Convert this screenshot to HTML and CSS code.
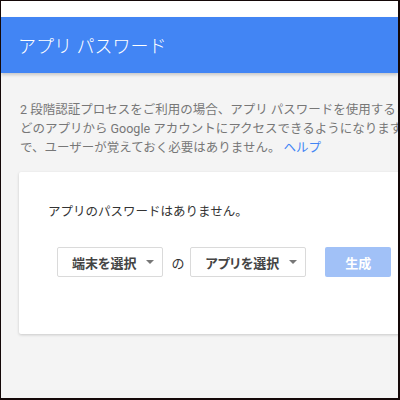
FILE: index.html
```html
<!DOCTYPE html>
<html lang="ja">
<head>
<meta charset="utf-8">
<link rel="stylesheet" href="styles.css">
</head>
<body>
<div class="frame">
  <div class="topgap"></div>
  <header class="appbar"><h1 class="title">アプリ パスワード</h1></header>
  <main class="content">
    <p class="intro">2 段階認証プロセスをご利用の場合、アプリ パスワードを使用すると<br>どのアプリから Google アカウントにアクセスできるようになります<br>で、ユーザーが覚えておく必要はありません。 <a class="link" href="#">ヘルプ</a></p>
    <section class="card">
      <p class="empty">アプリのパスワードはありません。</p>
      <div class="form-row">
        <button class="select">端末を選択<span class="caret"></span></button>
        <span class="of">の</span>
        <button class="select">アプリを選択<span class="caret"></span></button>
        <button class="generate">生成</button>
      </div>
    </section>
  </main>
</div>
</body>
</html>
```
FILE: styles.css
```css
html, body {
  margin: 0;
  padding: 0;
}
body {
  font-family: Roboto, "Noto Sans CJK JP", sans-serif;
}
.frame {
  width: 400px;
  height: 400px;
  box-sizing: border-box;
  border-style: solid;
  border-color: #140808;
  border-width: 1px 2px 2px 1px;
  background: #f4f4f4;
  overflow: hidden;
  display: flex;
  flex-direction: column;
}
.topgap {
  height: 16px;
  background: #ffffff;
  flex: none;
}
.appbar {
  height: 56px;
  flex: none;
  background: #4285f4;
  display: flex;
  align-items: center;
  padding-left: 17px;
  box-shadow: 0 2px 3px rgba(0, 0, 0, 0.18);
  position: relative;
  z-index: 1;
}
.title {
  margin: 0;
  font-size: 18px;
  font-weight: 300;
  color: #ffffff;
}
.content {
  padding: 27px 0 0 19px;
}
.intro {
  margin: 0;
  font-size: 12.5px;
  line-height: 19px;
  color: #777777;
  white-space: nowrap;
}
.link {
  color: #4285f4;
  text-decoration: none;
}
.card {
  margin-top: 15px;
  margin-left: -1px;
  width: 420px;
  background: #ffffff;
  border-radius: 2px;
  box-shadow: 0 1px 3px rgba(0, 0, 0, 0.18);
  padding: 30px 0 57px 29px;
  box-sizing: border-box;
}
.empty {
  margin: 0;
  font-size: 12.5px;
  line-height: 19px;
  color: #333333;
}
.form-row {
  margin-top: 26px;
  margin-left: 9px;
  display: flex;
  align-items: center;
}
.select {
  height: 30px;
  box-sizing: border-box;
  border: 1px solid #dadada;
  border-radius: 2px;
  background: #ffffff;
  padding: 0 8px 0 14px;
  display: flex;
  align-items: center;
  font-family: inherit;
  font-feature-settings: "palt";
  font-size: 13px;
  font-weight: 700;
  color: #444444;
}
.caret {
  width: 0;
  height: 0;
  margin-left: 10px;
  border-left: 4px solid transparent;
  border-right: 4px solid transparent;
  border-top: 4px solid #777777;
}
.of {
  margin: 0 6px 0 8px;
  font-size: 13px;
  color: #333333;
}
.generate {
  margin-left: 19px;
  width: 66px;
  height: 30px;
  border: none;
  border-radius: 2px;
  background: #a1c1f7;
  color: #ffffff;
  font-family: inherit;
  font-size: 13px;
  font-weight: 700;
}
```
